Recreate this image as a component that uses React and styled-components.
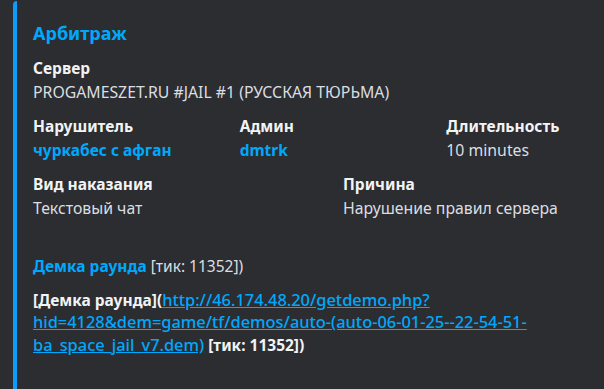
import styled, { createGlobalStyle } from "styled-components";

const GlobalStyle = createGlobalStyle`
  html, body {
    margin: 0;
    padding: 0;
    overflow: hidden;
    background: #2b2d31;
  }
  body {
    font-family: "Noto Sans", "Open Sans", sans-serif;
  }
`;

const Page = styled.div`
  width: 604px;
  height: 389px;
  overflow: hidden;
  padding: 1px 0 0 13px;
  box-sizing: border-box;
`;

const Embed = styled.article`
  width: 646px;
  min-height: 420px;
  box-sizing: border-box;
  background: #2b2d31;
  border-left: 4px solid #0d9cf7;
  border-radius: 4px;
  padding: 19px 16px 16px 16px;
  display: flex;
  flex-direction: column;
  gap: 10px;
`;

const Title = styled.div`
  font-size: 18px;
  line-height: 27px;
  font-weight: 700;
  color: #00a8fc;
`;

const Fields = styled.div`
  display: grid;
  grid-template-columns: repeat(12, 1fr);
  column-gap: 10px;
  row-gap: 12px;
`;

const Field = styled.div`
  grid-column: span ${(p) => p.span || 12};
  min-width: 0;
`;

const FieldName = styled.div`
  font-size: 15.5px;
  line-height: ${(p) => (p.wrap ? "22.4px" : "22px")};
  font-weight: 700;
  color: #f2f3f5;
  margin-bottom: 2px;
  min-height: 22px;
`;

const FieldValue = styled.div`
  font-size: 15.8px;
  line-height: 22px;
  color: #dbdee1;
`;

const Mention = styled.span`
  font-size: 15.5px;
  color: #00a8fc;
  font-weight: 700;
`;

const Tick = styled.span`
  font-size: 15.5px;
`;

const Link = styled.a`
  font-size: 16.4px;
  color: #00a8fc;
  text-decoration: underline;
  font-weight: 500;
  cursor: pointer;
`;

const fields = [
  { name: "Сервер", value: "PROGAMESZET.RU #JAIL #1 (РУССКАЯ ТЮРЬМА)" },
  { name: "Нарушитель", value: <Mention>чуркабес с афган</Mention>, span: 4 },
  { name: "Админ", value: <Mention>dmtrk</Mention>, span: 4 },
  { name: "Длительность", value: "10 minutes", span: 4 },
  { name: "Вид наказания", value: "Текстовый чат", span: 6 },
  { name: "Причина", value: "Нарушение правил сервера", span: 6 },
];

const demoUrl =
  "http://46.174.48.20/getdemo.php?hid=4128&dem=game/tf/demos/auto-(auto-06-01-25--22-54-51-ba_space_jail_v7.dem)";

export default function App() {
  return (
    <Page>
      <GlobalStyle />
      <Embed>
        <Title>Арбитраж</Title>
        <Fields>
          {fields.map((f) => (
            <Field key={f.name} span={f.span}>
              <FieldName>{f.name}</FieldName>
              <FieldValue>{f.value}</FieldValue>
            </Field>
          ))}
          <Field>
            <FieldName />
            <FieldValue>
              <Mention>Демка раунда</Mention> <Tick>[тик: 11352])</Tick>
            </FieldValue>
          </Field>
          <Field>
            <FieldName wrap="true">
              [Демка раунда](<Link>{demoUrl}</Link> [тик: 11352])
            </FieldName>
          </Field>
        </Fields>
      </Embed>
    </Page>
  );
}
